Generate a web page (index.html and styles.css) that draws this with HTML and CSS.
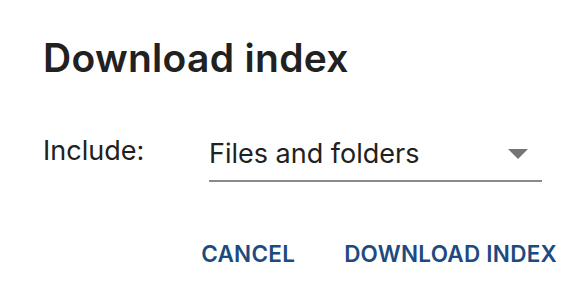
FILE: index.html
```html
<!DOCTYPE html>
<html>
<head>
<meta charset="utf-8">
<link rel="stylesheet" href="styles.css">
</head>
<body>
<div class="dialog">
  <h1 class="title">Download index</h1>
  <div class="row">
    <label class="label">Include:</label>
    <div class="select">
      <span class="value">Files and folders</span>
      <svg class="arrow" width="20" height="10" viewBox="0 0 20 10"><path d="M0 0 H20 L10 10 Z" fill="#757575"/></svg>
    </div>
  </div>
  <div class="actions">
    <button class="btn">CANCEL</button>
    <button class="btn">DOWNLOAD INDEX</button>
  </div>
</div>
</body>
</html>
```
FILE: styles.css
```css
html, body { margin: 0; padding: 0; background: #fff; }
body { font-family: Inter, "Noto Sans", sans-serif; color: #212121; }
.dialog { width: 586px; height: 296px; box-sizing: border-box; padding: 34px 29px 0 43px; }
.title { margin: 0; font-size: 39px; font-weight: 600; line-height: 48px; color: #212121; letter-spacing: 0.3px; }
.row { display: flex; align-items: flex-start; margin-top: 51px; padding-right: 15px; }
.label { width: 166px; flex: none; font-size: 27px; line-height: 36px; color: #212121; }
.select { flex: 1; display: flex; align-items: center; justify-content: space-between; border-bottom: 2px solid #8a8a8a; padding: 3px 14px 8px 0; }
.value { font-size: 27px; line-height: 36px; color: #212121; }
.arrow { display: block; margin-top: 0; }
.actions { display: flex; justify-content: flex-end; gap: 49px; margin-top: 58px; }
.btn { background: none; border: 0; padding: 0; font-family: Inter, sans-serif; font-size: 22.5px; line-height: 28px; font-weight: 600; color: #1d4a80; letter-spacing: 0.25px; }
```
